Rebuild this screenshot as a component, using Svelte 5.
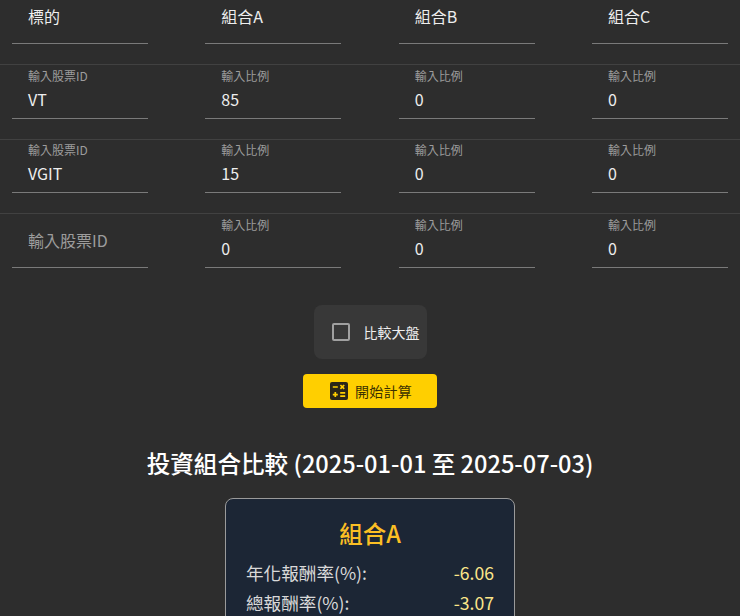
<script>
    const headers = ["標的", "組合A", "組合B", "組合C"];
    const rows = [
        { id: "VT", values: ["85", "0", "0"] },
        { id: "VGIT", values: ["15", "0", "0"] },
        { id: "", values: ["0", "0", "0"] },
    ];
    const stats = [
        { label: "年化報酬率(%):", value: "-6.06" },
        { label: "總報酬率(%):", value: "-3.07" },
    ];
</script>

<div class="page">
    <div class="row head">
        {#each headers as h}
            <div class="field"><span class="value">{h}</span></div>
        {/each}
    </div>
    {#each rows as row, i}
        <div class="row" class:last={i === rows.length - 1}>
            <div class="field">
                {#if row.id}
                    <span class="label">輸入股票ID</span>
                    <span class="value">{row.id}</span>
                {:else}
                    <span class="placeholder">輸入股票ID</span>
                {/if}
            </div>
            {#each row.values as v}
                <div class="field">
                    <span class="label">輸入比例</span>
                    <span class="value">{v}</span>
                </div>
            {/each}
        </div>
    {/each}

    <div class="actions">
        <div class="check">
            <span class="box"></span>
            <span class="check-text">比較大盤</span>
        </div>
        <button class="run">
            <svg width="18" height="18" viewBox="0 0 18 18">
                <rect width="18" height="18" rx="2" fill="#2b2618" />
                <path d="M2.8 5h5M2.8 12.6h5M5.3 10.1v5M10.4 3l3.8 3.8M14.2 3l-3.8 3.8M10.2 10.8h5M10.2 14.2h5" stroke="#ffcf00" stroke-width="1.7" fill="none" />
            </svg>
            <span>開始計算</span>
        </button>
    </div>

    <h2>投資組合比較 (2025-01-01 至 2025-07-03)</h2>

    <div class="card">
        <h3>組合A</h3>
        {#each stats as s}
            <div class="stat">
                <span>{s.label}</span>
                <span class="num">{s.value}</span>
            </div>
        {/each}
    </div>
</div>

<style>
    :global(body) {
        background: #2d2d2d;
        overflow: hidden;
    }

    .page {
        height: 616px;
        overflow: hidden;
        background: #2d2d2d;
        color: #fff;
        font-family: "Noto Sans CJK TC", "Noto Sans", sans-serif;
    }

    .row {
        display: grid;
        grid-template-columns: repeat(4, 136px);
        justify-content: space-between;
        padding: 0 12px 20px;
        height: 53.6px;
        border-bottom: 1px solid #414141;
    }

    .row.last {
        border-bottom: 0;
    }

    .row.head {
        height: 44px;
    }

    .field {
        display: flex;
        flex-direction: column;
        justify-content: flex-end;
        padding: 0 16px 7px;
        border-bottom: 1px solid #7a7a7a;
        box-sizing: border-box;
    }

    .label {
        font-size: 12px;
        line-height: 16px;
        margin-bottom: 3px;
        color: #9c9c9c;
    }

    .value {
        font-size: 16px;
        line-height: 24px;
        color: #eee;
    }

    .placeholder {
        font-size: 16px;
        line-height: 24px;
        padding-bottom: 8px;
        color: #9c9c9c;
    }

    .head .field {
        justify-content: flex-start;
        padding-top: 4px;
    }

    .actions {
        display: flex;
        flex-direction: column;
        align-items: center;
        gap: 15px;
        margin-top: 17px;
    }

    .check {
        display: flex;
        align-items: center;
        gap: 14px;
        width: 113px;
        height: 54px;
        box-sizing: border-box;
        padding-left: 18px;
        background: #383838;
        border-radius: 8px;
    }

    .box {
        width: 18px;
        height: 18px;
        box-sizing: border-box;
        border: 2px solid #a0a0a0;
        border-radius: 2px;
    }

    .check-text {
        font-size: 14px;
        color: #eee;
    }

    .run {
        display: flex;
        align-items: center;
        justify-content: center;
        gap: 7px;
        width: 134px;
        height: 34px;
        padding: 0 0 0 2px;
        border: 0;
        border-radius: 4px;
        background: #ffcf00;
        color: #3a3000;
        font-family: inherit;
        font-size: 14px;
        letter-spacing: 0.25px;
    }

    h2 {
        margin: 35px 0 15px;
        text-align: center;
        font-size: 23.6px;
        line-height: 40px;
        font-weight: 500;
        color: #fff;
    }

    .card {
        width: 290px;
        margin: 0 auto;
        box-sizing: border-box;
        padding: 14px 20px;
        background: #1c2635;
        border: 1px solid #9a9a9a;
        border-radius: 8px;
    }

    h3 {
        margin: 0 0 5px;
        text-align: center;
        font-size: 23.5px;
        line-height: 40px;
        font-weight: 500;
        color: #fbbf24;
    }

    .stat {
        display: flex;
        justify-content: space-between;
        font-size: 17.6px;
        line-height: 30px;
        color: #d9d9d9;
    }

    .num {
        color: #fde68a;
    }
</style>
